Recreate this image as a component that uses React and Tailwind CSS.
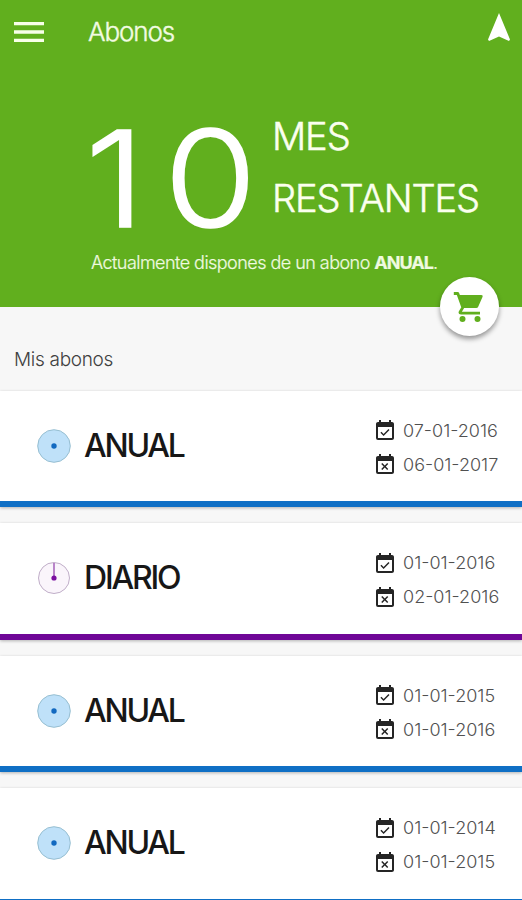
import { MdEventAvailable, MdEventBusy, MdMenu } from "react-icons/md";

const passes = [
  { id: 1, type: "ANUAL", from: "07-01-2016", to: "06-01-2017" },
  { id: 2, type: "DIARIO", from: "01-01-2016", to: "02-01-2016" },
  { id: 3, type: "ANUAL", from: "01-01-2015", to: "01-01-2016" },
  { id: 4, type: "ANUAL", from: "01-01-2014", to: "01-01-2015" },
];

function CartIcon() {
  return (
    <svg viewBox="0 0 44 44" className="h-11 w-11 text-[#61af1e]" fill="currentColor">
      <path
        d="M5.8 8.5h4l5 14-2.7 4.4q-.6 1.2 1 1.2H32"
        fill="none"
        stroke="currentColor"
        strokeWidth="2.8"
        strokeLinejoin="round"
      />
      <path d="M10 10h23.3q2 0 1.3 1.8l-4.4 9.9q-.5 1.3-2 1.3H14.5z" />
      <circle cx="14.5" cy="34" r="3" />
      <circle cx="29.5" cy="34" r="3" />
    </svg>
  );
}

function NavIcon() {
  return (
    <svg viewBox="0 0 22 28" className="h-7 w-[22px]" fill="currentColor">
      <path d="M11 0 22 26.6 21 28 11 23.5 1 28 0 26.6z" />
    </svg>
  );
}

function PassDial({ daily }) {
  if (daily) {
    return (
      <svg viewBox="0 0 34 34" className="h-[34px] w-[34px]">
        <circle cx="17" cy="17" r="15.5" fill="#faf5fb" stroke="#b9a5c2" strokeWidth="0.9" />
        <path d="M17 2v15" stroke="#8e3aa8" strokeWidth="1.2" />
        <circle cx="17" cy="17" r="2.6" fill="#7b0fa0" />
      </svg>
    );
  }

  return (
    <svg viewBox="0 0 34 34" className="h-[34px] w-[34px]">
      <circle cx="17" cy="17" r="16.3" fill="#bfe1f9" stroke="#8fb9cc" strokeWidth="0.9" />
      <circle cx="17" cy="17" r="2.7" fill="#1269c0" />
    </svg>
  );
}

function DateRow({ icon: Icon, children }) {
  return (
    <div className="flex h-[34px] items-center">
      <Icon className="h-6 w-6 shrink-0 text-[#252525]" />
      <span className="ml-[6px] origin-left scale-x-[1.06] text-[17px] leading-none font-light whitespace-nowrap text-[#505050]">
        {children}
      </span>
    </div>
  );
}

function PassCard({ pass }) {
  const daily = pass.type === "DIARIO";

  return (
    <article
      className={`flex h-[116.5px] shrink-0 justify-between border-b-[6px] bg-white shadow-[0_1px_3px_rgba(0,0,0,0.28)] ${
        daily ? "border-[#6f0797]" : "border-[#0f6fc5]"
      }`}
    >
      <div className="flex items-center pl-[37px]">
        <PassDial daily={daily} />
        <h2
          className={`ml-[13px] text-[32px] leading-none font-medium text-[#171717] ${
            daily ? "tracking-[-2.2px]" : "tracking-[-2.2px]"
          }`}
        >
          {pass.type}
        </h2>
      </div>
      <div className="w-[149px] pt-[23.5px]">
        <DateRow icon={MdEventAvailable}>{pass.from}</DateRow>
        <DateRow icon={MdEventBusy}>{pass.to}</DateRow>
      </div>
    </article>
  );
}

export default function App() {
  return (
    <div className="flex h-[900px] w-[522px] flex-col overflow-hidden bg-[#f7f7f7] font-['Inter',sans-serif]">
      <header className="relative h-[307px] shrink-0 bg-[#61af1e] text-white">
        <div className="flex h-16 items-center pl-[9px]">
          <button aria-label="Menu">
            <MdMenu className="h-10 w-10 text-[#f8ffe9]" />
          </button>
          <h1 className="ml-[39px] text-[26px] leading-none font-light tracking-[-1.1px] text-[#f2fbe2] [-webkit-text-stroke:0.4px]">
            Abonos
          </h1>
          <div className="mr-3 mb-[11px] ml-auto">
            <NavIcon />
          </div>
        </div>

        <div className="flex pl-[91px]">
          <div className="flex h-[180px] w-[181px] pt-[64px] text-[134px] leading-[100px] font-light [-webkit-text-stroke:1.6px]">
            <span className="h-[100px] w-[73px] origin-left -translate-x-[6px] scale-x-[1.14]">1</span>
            <span className="h-[100px] origin-left scale-x-[1.12]">0</span>
          </div>
          <div className="pt-[41px] text-[38px] leading-[62px] font-light tracking-[-1.1px] text-[#fbffee] [-webkit-text-stroke:0.5px]">
            <p>MES</p>
            <p className="whitespace-nowrap">RESTANTES</p>
          </div>
        </div>
        <p className="pt-[8px] pl-[91px] text-[18px] leading-[22px] font-light tracking-[-0.54px] whitespace-nowrap text-[#f0fae0] [-webkit-text-stroke:0.2px]">
          Actualmente dispones de un abono <b className="font-bold tracking-[-1px]">ANUAL</b>.
        </p>

        <button
          aria-label="Comprar"
          className="absolute top-[277px] left-[440px] flex h-[59px] w-[59px] items-center justify-center rounded-full bg-white shadow-[0_3px_5px_rgba(0,0,0,0.4)]"
        >
          <CartIcon />
        </button>
      </header>

      <h3 className="h-[83.5px] shrink-0 pt-[43px] pl-[14px] text-[19px] leading-[20px] font-light tracking-[-0.3px] text-[#404040]">
        Mis abonos
      </h3>

      <main className="flex flex-col gap-4">
        {passes.map((pass) => (
          <PassCard key={pass.id} pass={pass} />
        ))}
      </main>
    </div>
  );
}
